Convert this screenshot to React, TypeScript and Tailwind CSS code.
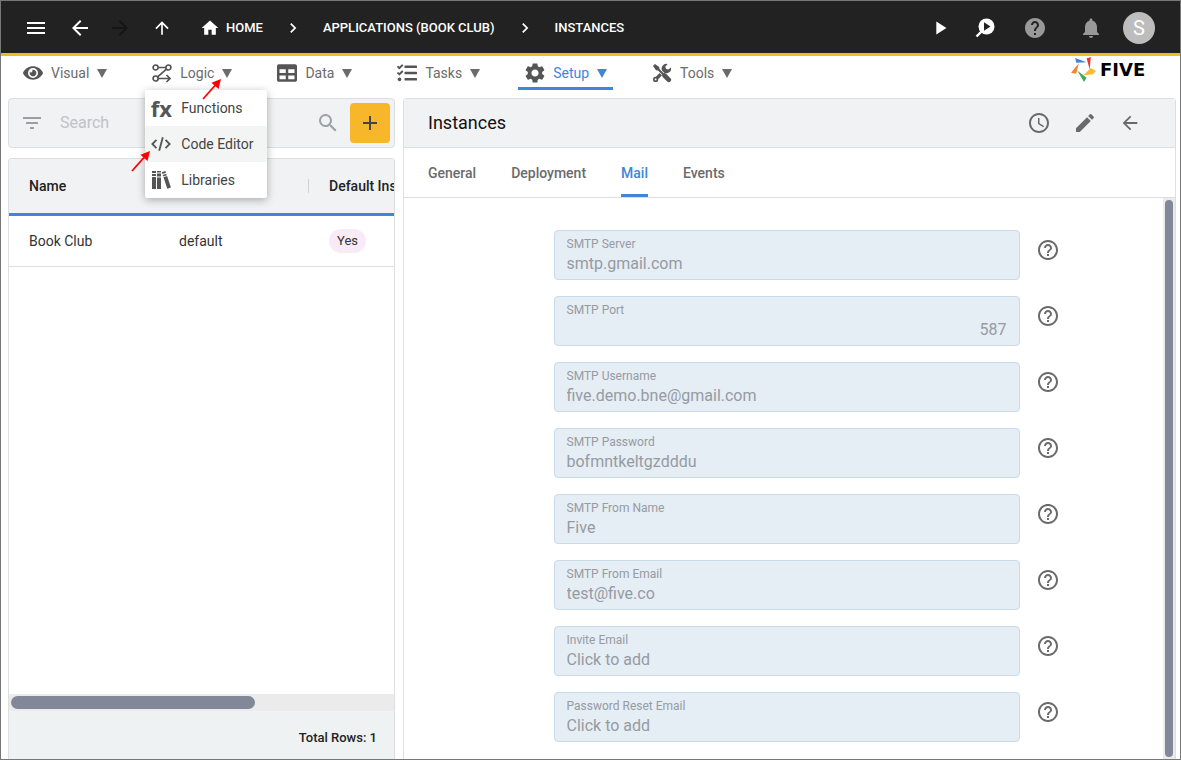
import type { ReactNode } from "react";
import {
  MdAdd,
  MdArrowBack,
  MdArrowForward,
  MdArrowUpward,
  MdChevronRight,
  MdEdit,
  MdFilterList,
  MdHelp,
  MdHelpOutline,
  MdHome,
  MdMenu,
  MdNotifications,
  MdPlayArrow,
  MdSchedule,
  MdSearch,
  MdSettings,
} from "react-icons/md";
import { FaEye, FaTable, FaTasks } from "react-icons/fa";

const fields = [
  { id: "server", label: "SMTP Server", value: "smtp.gmail.com" },
  { id: "port", label: "SMTP Port", value: "587", numeric: true },
  { id: "username", label: "SMTP Username", value: "five.demo.bne@gmail.com" },
  { id: "password", label: "SMTP Password", value: "bofmntkeltgzdddu" },
  { id: "from-name", label: "SMTP From Name", value: "Five" },
  { id: "from-email", label: "SMTP From Email", value: "test@five.co" },
  { id: "invite", label: "Invite Email", value: "Click to add" },
  { id: "reset", label: "Password Reset Email", value: "Click to add" },
];

const tabs = ["General", "Deployment", "Mail", "Events"];

function LogicIcon() {
  return (
    <svg className="size-5" viewBox="0 0 20 20" fill="none" stroke="currentColor" strokeWidth={1.7}>
      <circle cx="3.6" cy="4.500" r="2.500" />
      <circle cx="3.6" cy="15.500" r="2.500" />
      <circle cx="16.400" cy="4.500" r="2.500" />
      <path d="M6 4.500h8M14.400 6.200L5.600 13.800M6 15.500h11.500M14.500 12l3.500 3.500-3.500 3.500" />
    </svg>
  );
}

function CodeIcon() {
  return (
    <svg className="h-5 w-[22px]" viewBox="0 0 22 20" fill="none" stroke="currentColor" strokeWidth={2}>
      <path d="M6 5.500L1.500 10 6 14.500M16 5.500l4.500 4.500-4.500 4.500M13 2.500l-4 15" />
    </svg>
  );
}

function BooksIcon() {
  return (
    <svg className="size-5" viewBox="0 0 20 20" fill="currentColor">
      <path d="M1 1h4v2H1zM1 4h4v2H1zM1 7h4v12H1zM6 1h4v1.500H6zM6 3.500h4v3H6zM6 7.500h4V19H6z" />
      <path d="M10.800 2.200l3.600-1.200.6 1.800-3.600 1.200zM11.700 4.900l3.600-1.200.5 1.500-3.600 1.200zM12.500 7.300l3.600-1.200 3.800 11.300-3.600 1.300z" />
    </svg>
  );
}

function ToolsIcon() {
  return (
    <svg className="size-5" viewBox="0 0 20 20">
      <path d="M3.400 16.600L13 7" stroke="currentColor" strokeWidth={3.400} strokeLinecap="round" />
      <path d="M19 4.400a4.800 4.800 0 0 1-8.600 3.800A4.800 4.800 0 0 1 15.700 1l-2.400 2.600.6 2.500 2.500.5z" fill="currentColor" />
      <circle cx="3.600" cy="16.400" r="2.600" fill="currentColor" />
      <circle cx="3.600" cy="16.400" r=".9" fill="#fff" />
      <path d="M5 5l7.500 7.500" stroke="#fff" strokeWidth={3.600} />
      <path d="M1 3l2-2 4.200 3 .3 2 5 5-1.500 1.500-5-5-2-.3z" fill="currentColor" />
      <path d="M12.500 12.500l4.300 4.300" stroke="currentColor" strokeWidth={4.600} strokeLinecap="round" />
    </svg>
  );
}

function InspectIcon() {
  return (
    <svg className="size-5" viewBox="0 0 20 20">
      <path d="M7 13l-5.500 5.500" stroke="currentColor" strokeWidth={2.400} />
      <circle cx="11.500" cy="8.500" r="8" fill="currentColor" />
      <path d="M9 4.300l6.500 4.200L9 12.700z" fill="#222" />
    </svg>
  );
}

function Logo() {
  return (
    <a href="#" className="flex items-center gap-1 pt-px text-black">
      <svg className="size-[25px]" viewBox="0 0 24 24">
        <path d="M4 1l11 4-10 .5z" fill="#4285d8" />
        <path d="M15 1.500L19 0l-1 12z" fill="#e53935" />
        <path d="M7.500 6L5 16l-5-1z" fill="#f58233" />
        <path d="M24 13.500L19 10.500l-7 7 9-1z" fill="#fbb829" />
        <path d="M6 13l9 7-2.500 4z" fill="#43a857" />
      </svg>
      <span className="w-[58px] font-['DejaVu_Sans',sans-serif] text-lg leading-6 font-bold">FIVE</span>
    </a>
  );
}

// Small red pointer laid over the menus
function Pointer() {
  return (
    <svg className="h-[22px] w-5" viewBox="0 0 20 22">
      <path d="M1 21L13 7.500" stroke="#f00" strokeWidth={1.800} />
      <path d="M19 1l-2.500 10-7-6.200z" fill="#f00" />
    </svg>
  );
}

function MenuItem({ icon, label, active, children }: { icon: ReactNode; label: string; active?: boolean; children?: ReactNode }) {
  return (
    <div className={`relative border-y-3 border-t-transparent ${active ? "border-b-[#4285d8] text-[#4285d8]" : "border-b-transparent text-[#6b6b6b]"}`}>
      <button className="flex h-7 items-center gap-2 pr-[6px] pl-[7px] text-sm">
        <span className="flex size-5 items-center justify-center text-xl text-[#555]">{icon}</span>
        {label}
        <svg className="size-[10px]" viewBox="0 0 10 10" fill="currentColor">
          <path d="M0 1h10L5 10z" />
        </svg>
      </button>
      {children}
    </div>
  );
}

function DropItem({ icon, label, active }: { icon: ReactNode; label: string; active?: boolean }) {
  return (
    <button className={`flex h-9 w-full items-center gap-[10px] px-[6px] text-sm text-[#444] ${active ? "bg-[#f3f4f4]" : ""}`}>
      <span className="flex w-5 shrink-0 justify-center text-[22px] leading-7 text-[#555]">{icon}</span>
      <span className="whitespace-nowrap">{label}</span>
    </button>
  );
}

export default function App() {
  return (
    <div className="flex h-screen flex-col overflow-hidden border border-[#777] bg-white font-[Roboto,sans-serif] text-[#333]">
      <header className="flex h-[55px] shrink-0 items-center justify-between border-b-3 border-[#f8b62a] bg-[#222] pt-[2px] pr-[25px] pl-[23px] text-white">
        <nav className="flex items-center text-[13px] font-medium">
          <button aria-label="Menu" className="mr-5"><MdMenu size={24} /></button>
          <button aria-label="Back" className="mr-4"><MdArrowBack size={24} /></button>
          <button aria-label="Forward" className="mr-5 text-[#151515]"><MdArrowForward size={24} /></button>
          <button aria-label="Up" className="mr-7"><MdArrowUpward size={20} /></button>
          <a href="#" className="flex items-center gap-[6px]"><MdHome size={20} />HOME</a>
          <MdChevronRight size={20} className="mx-5" />
          <a href="#">APPLICATIONS (BOOK CLUB)</a>
          <MdChevronRight size={20} className="mx-5" />
          <a href="#">INSTANCES</a>
        </nav>
        <div className="flex items-center">
          <button aria-label="Run" className="mr-6"><MdPlayArrow size={22} /></button>
          <button aria-label="Inspect" className="mr-7"><InspectIcon /></button>
          <button aria-label="Help" className="mr-8 text-[#999]"><MdHelp size={24} /></button>
          <button aria-label="Notifications" className="mr-5 text-[#999]"><MdNotifications size={24} /></button>
          <button className="size-8 rounded-full bg-[#bdbdbd] text-xl">S</button>
        </div>
      </header>

      <div className="flex h-[42px] shrink-0 items-start justify-between pr-[22px] pl-[15px]">
        <nav className="flex gap-8">
          <MenuItem icon={<FaEye />} label="Visual" />
          <MenuItem icon={<LogicIcon />} label="Logic">
            <div className="absolute top-[31px] left-0 z-10 w-[122px] rounded-xs bg-white shadow-[0_2px_8px_rgba(0,0,0,0.3)]">
              <DropItem icon={<span className="font-['Open_Sans',sans-serif] font-bold">fx</span>} label="Functions" />
              <DropItem icon={<CodeIcon />} label="Code Editor" active />
              <DropItem icon={<BooksIcon />} label="Libraries" />
              <div className="absolute -top-3 left-[57px]"><Pointer /></div>
              <div className="absolute top-[60px] -left-[14px]"><Pointer /></div>
            </div>
          </MenuItem>
          <MenuItem icon={<FaTable />} label="Data" />
          <MenuItem icon={<FaTasks />} label="Tasks" />
          <MenuItem icon={<MdSettings size={24} className="shrink-0" />} label="Setup" active />
          <MenuItem icon={<ToolsIcon />} label="Tools" />
        </nav>
        <Logo />
      </div>

      <main className="flex min-h-0 flex-1 gap-2 pr-1 pl-[7px]">
        <section className="flex w-[387px] shrink-0 flex-col gap-[10px]">
          <div className="flex h-[50px] shrink-0 items-center rounded border border-[#dcdee0] bg-[#f1f2f4] pr-1 pl-[11px] text-[#9aa0a6]">
            <MdFilterList size={24} />
            <input aria-label="Search" placeholder="Search" className="ml-4 min-w-0 flex-1 text-base outline-none placeholder:text-[#bfc2c6]" />
            <MdSearch size={24} className="mr-[10px]" />
            <button aria-label="Add" className="flex size-10 items-center justify-center rounded bg-[#f8b62a] text-[#444]"><MdAdd size={24} /></button>
          </div>
          <div className="flex min-h-0 flex-1 flex-col overflow-hidden rounded-t border border-b-0 border-[#dcdee0]">
            <div className="flex-1 overflow-hidden">
              <table className="w-[470px] table-fixed text-left text-sm">
                <thead>
                  <tr className="h-[55px] border-b-3 border-[#4285d8] bg-[#f1f2f4] text-[#222]">
                    <th className="w-[150px] pl-5 font-medium">Name</th>
                    <th className="w-[150px] pl-5 font-medium">
                      <div className="ml-auto h-[14px] border-r border-[#d0d2d4]" />
                    </th>
                    <th className="pl-5 font-medium whitespace-nowrap">Default Instance</th>
                  </tr>
                </thead>
                <tbody>
                  <tr className="h-[52px] border-b border-[#dcdee0]">
                    <td className="pl-5">Book Club</td>
                    <td className="pl-5">default</td>
                    <td className="pl-5"><span className="inline-block rounded-full bg-[#f8ebf6] px-2 text-[13px] leading-6">Yes</span></td>
                  </tr>
                </tbody>
              </table>
            </div>
            <div className="h-[17px] bg-[#ebebeb] p-[2px]">
              <div className="h-[13px] w-[64%] rounded-full bg-[#828897]" />
            </div>
            <footer className="h-12 bg-[#eef2f3] pr-[17px] text-right text-[13px] leading-[54px] font-medium text-[#222]">Total Rows: 1</footer>
          </div>
        </section>

        <section className="flex min-w-0 flex-1 flex-col rounded-t border border-b-0 border-[#dcdee0]">
          <div className="flex h-[49px] shrink-0 items-center border-b border-[#dcdee0] bg-[#f1f2f4] pr-[34px] pl-6 text-[#6a6a6a]">
            <h1 className="flex-1 text-lg text-[#111]">Instances</h1>
            <div className="flex gap-[22px]">
              <button aria-label="History"><MdSchedule size={24} /></button>
              <button aria-label="Edit"><MdEdit size={24} /></button>
              <button aria-label="Close"><MdArrowBack size={22} /></button>
            </div>
          </div>
          <nav className="flex h-[50px] shrink-0 gap-[35px] border-b border-[#dcdee0] pl-6 text-sm font-medium text-[#6b6b6b]">
            {tabs.map((tab) => (
              <button key={tab} className={`border-y-3 border-t-transparent ${tab === "Mail" ? "border-b-[#4285d8] text-[#4285d8]" : "border-b-transparent"}`}>
                {tab}
              </button>
            ))}
          </nav>
          <div className="flex min-h-0 flex-1">
            <form className="flex flex-1 flex-col items-center gap-4 pt-8 pl-[46px]">
              {fields.map((field) => (
                <div key={field.id} className="flex shrink-0 gap-4">
                  <div className="h-[50px] w-[466px] rounded border border-[#c9daea] bg-[#e5edf5] px-3 pt-1 text-[#969ba2]">
                    <label htmlFor={field.id} className="block text-xs leading-[18px]">{field.label}</label>
                    <input id={field.id} defaultValue={field.value} readOnly className={`block w-full text-base leading-[22px] outline-none ${field.numeric ? "text-right" : ""}`} />
                  </div>
                  <button type="button" aria-label={`Help for ${field.label}`} className="h-10 text-[#6a6a6a]"><MdHelpOutline size={24} /></button>
                </div>
              ))}
            </form>
            <div className="w-3 bg-[#ebebeb] p-[2px]">
              <div className="h-full rounded-full bg-[#828897]" />
            </div>
          </div>
        </section>
      </main>
    </div>
  );
}
